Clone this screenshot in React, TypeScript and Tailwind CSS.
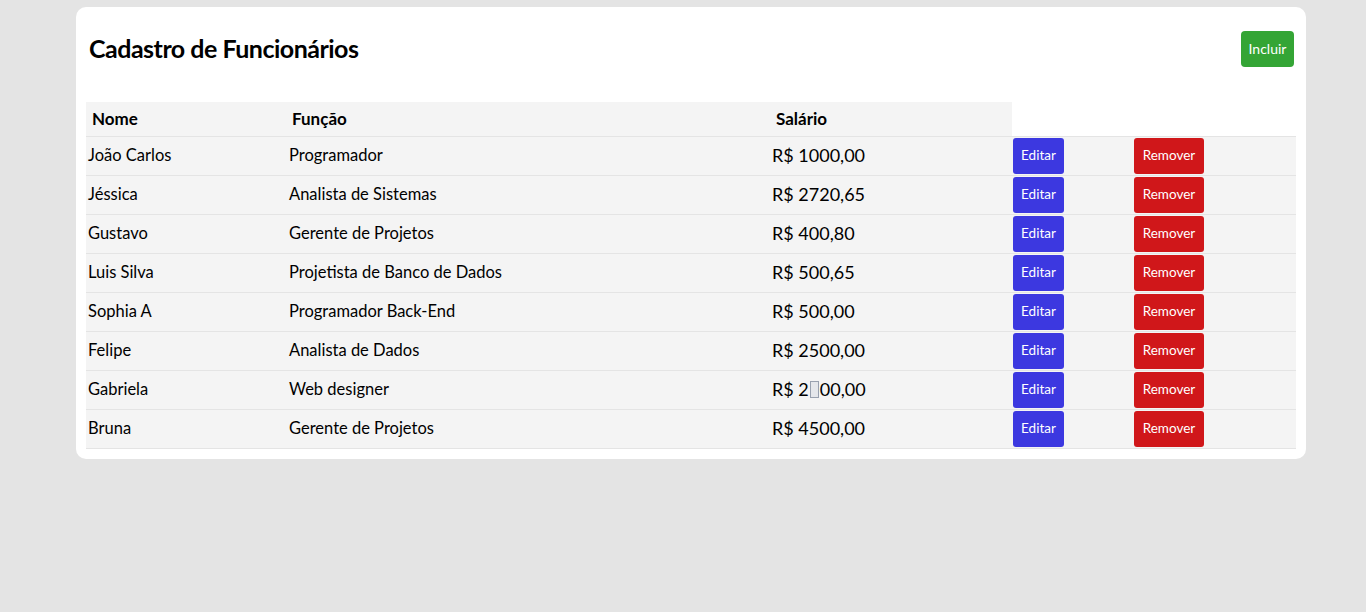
import React from "react";

type Funcionario = {
  nome: string;
  funcao: string;
  salario: React.ReactNode;
};

const funcionarios: Funcionario[] = [
  { nome: "João Carlos", funcao: "Programador", salario: "R$ 1000,00" },
  { nome: "Jéssica", funcao: "Analista de Sistemas", salario: "R$ 2720,65" },
  { nome: "Gustavo", funcao: "Gerente de Projetos", salario: "R$ 400,80" },
  { nome: "Luis Silva", funcao: "Projetista de Banco de Dados", salario: "R$ 500,65" },
  { nome: "Sophia A", funcao: "Programador Back-End", salario: "R$ 500,00" },
  { nome: "Felipe", funcao: "Analista de Dados", salario: "R$ 2500,00" },
  {
    nome: "Gabriela",
    funcao: "Web designer",
    salario: (
      <>
        R$ 2
        <span className="inline-block w-[9px] h-[17px] align-[-2px] border border-gray-400 bg-gray-200 mx-[1px]" />
        00,00
      </>
    ),
  },
  { nome: "Bruna", funcao: "Gerente de Projetos", salario: "R$ 4500,00" },
];

export default function App() {
  return (
    <div className="min-h-[612px] bg-[#e4e4e4] pt-[7px] font-['Lato',sans-serif] text-black">
      <div className="ml-[76px] w-[1230px] bg-white rounded-[10px] px-[10px] pb-[10px]">
        {/* cabeçalho */}
        <div className="flex items-center justify-between h-[95px] pl-[3px] pr-[2px]">
          <h1 className="text-[25px] font-bold tracking-[-0.5px] mt-[-12px]">Cadastro de Funcionários</h1>
          <button className="bg-[#34a535] text-white text-[14px] rounded-[4px] h-[36px] w-[53px] mt-[-12px]">
            Incluir
          </button>
        </div>

        <table className="w-[1210px] border-collapse text-[16.5px]">
          <colgroup>
            <col className="w-[200px]" />
            <col className="w-[484px]" />
            <col className="w-[242px]" />
            <col className="w-[121px]" />
            <col className="w-[163px]" />
          </colgroup>
          <thead>
            <tr className="h-[34px]">
              <th className="bg-[#f4f4f4] text-left font-bold text-[17px] px-[6px]">Nome</th>
              <th className="bg-[#f4f4f4] text-left font-bold text-[17px] px-[6px]">Função</th>
              <th className="bg-[#f4f4f4] text-left font-bold text-[17px] px-[6px]">Salário</th>
              <th />
              <th />
            </tr>
          </thead>
          <tbody>
            {funcionarios.map((f) => (
              <tr key={f.nome} className="h-[39px] bg-[#f4f4f4] border-y border-[#e4e4e4]">
                <td className="px-[2px]">{f.nome}</td>
                <td className="px-[3px]">{f.funcao}</td>
                <td className="px-[2px] text-[18px]">{f.salario}</td>
                <td className="px-[1px]">
                  <button className="bg-[#3c38e0] text-white text-[13.5px] rounded-[3px] h-[36px] w-[51px] align-middle">
                    Editar
                  </button>
                </td>
                <td className="px-[1px]">
                  <button className="bg-[#d0171a] text-white text-[13.5px] rounded-[3px] h-[36px] w-[70px] align-middle">
                    Remover
                  </button>
                </td>
              </tr>
            ))}
          </tbody>
        </table>
      </div>
    </div>
  );
}
